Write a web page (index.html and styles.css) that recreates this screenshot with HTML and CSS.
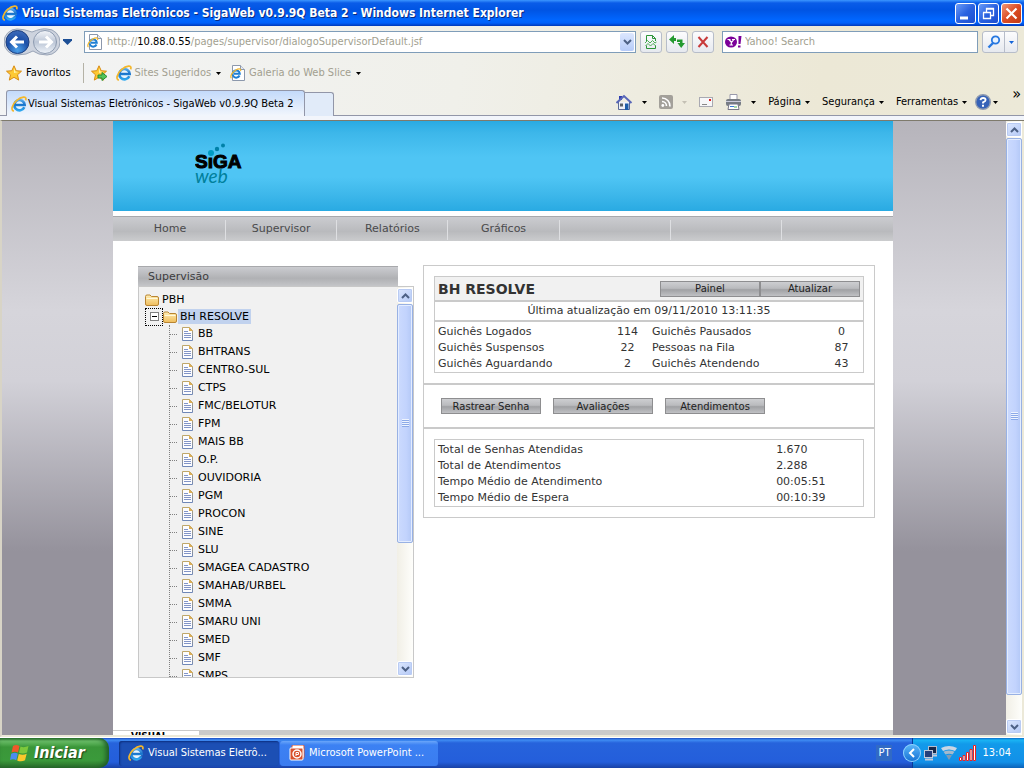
FILE: index.html
```html
<!DOCTYPE html>
<html lang="pt-BR">
<head>
<meta charset="utf-8">
<title>Visual Sistemas Eletrônicos - SigaWeb v0.9.9Q Beta 2</title>
<link rel="stylesheet" href="styles.css">
</head>
<body>
<svg class="defs" aria-hidden="true">
  <defs>
    <linearGradient id="gBlue" gradientUnits="userSpaceOnUse" x1="0" y1="2" x2="0" y2="15"><stop offset="0" stop-color="#6cc0f6"/><stop offset=".5" stop-color="#1a74cc"/><stop offset="1" stop-color="#30aaf0"/></linearGradient>
    <linearGradient id="gFolder" x1="0" y1="0" x2="0" y2="1"><stop offset="0" stop-color="#ffeeb4"/><stop offset="1" stop-color="#efbd5c"/></linearGradient>
    <radialGradient id="gBack" cx=".5" cy=".85" r=".8"><stop offset="0" stop-color="#4aa0ea"/><stop offset=".6" stop-color="#1d50a8"/><stop offset="1" stop-color="#3a68b8"/></radialGradient>
    <linearGradient id="gFwd" x1="0" y1="0" x2="0" y2="1"><stop offset="0" stop-color="#f4f6fa"/><stop offset=".5" stop-color="#bcc6d6"/><stop offset="1" stop-color="#eef3f9"/></linearGradient>
    <linearGradient id="gDoc" x1="0" y1="0" x2="0" y2="1"><stop offset="0" stop-color="#bfa76a"/><stop offset="1" stop-color="#7088b8"/></linearGradient>
    <symbol id="ie" viewBox="0 0 16 16">
      <circle cx="8.500" cy="8.500" r="5" fill="#e8f4fe"/>
      <path d="M13.300 11.200A5.200 5.200 0 1 1 13.700 9H4.500" fill="none" stroke="url(#gBlue)" stroke-width="2.600"/>
      <path d="M3 15C-.5 15 .8 8.500 5.500 4.600C10 .8 16.500-.8 14.600 4.400" fill="none" stroke="#f3b72c" stroke-width="1.700"/>
    </symbol>
    <symbol id="iepage" viewBox="0 0 16 16">
      <path d="M2.500.5h8l4 4v11h-12z" fill="#fff" stroke="#8c98ac"/><path d="M10.500.5v4h4" fill="#e4e9f2" stroke="#8c98ac"/>
      <path d="M9.500 10.500A3.600 3.600 0 1 1 9.800 8.800H4" fill="none" stroke="#1e7fd4" stroke-width="2"/>
      <path d="M1.500 13C-.5 12 2 7.500 5.500 5.300C8.500 3.400 11.500 3.300 10.500 6" fill="none" stroke="#f3b72c" stroke-width="1.200"/>
    </symbol>
    <symbol id="star" viewBox="0 0 16 16"><path d="M8 .8l2.200 4.900 5.300.5-4 3.600 1.200 5.300L8 12.300l-4.700 2.800 1.200-5.300-4-3.600 5.300-.5z" fill="#fdc934" stroke="#d98b12"/><path d="M8 3l1.300 3.600 3.200.4L8 8z" fill="#fff3a8"/></symbol>
    <symbol id="folder" viewBox="0 0 14 12"><path d="M.5 2.500q0-1.500 1.500-1.500h3l1.500 1.500h5.500q1.500 0 1.500 1.500v6q0 1.500-1.500 1.500H2Q.5 11.500.5 10z" fill="url(#gFolder)" stroke="#b98532"/><path d="M1.500 4.500h11" stroke="#fff9dc"/></symbol>
    <symbol id="doc" viewBox="0 0 11 14"><path d="M.5.500h7l3 3v10H.5z" fill="#fdfdff" stroke="url(#gDoc)"/><path d="M7 0l4 4H7z" fill="#dcae55"/><path d="M2 4.500h4M2 6.500h7M2 8.500h7M2 10.500h7" stroke="#8295c8"/></symbol>
    <symbol id="up" viewBox="0 0 9 6"><path d="M1 5L4.500 1.500 8 5" fill="none" stroke="#4d6185" stroke-width="2"/></symbol>
    <symbol id="down" viewBox="0 0 9 6"><path d="M1 1l3.500 3.500L8 1" fill="none" stroke="#4d6185" stroke-width="2"/></symbol>
    <symbol id="caret" viewBox="0 0 5 3"><path d="M0 0h5L2.500 3z" fill="currentColor"/></symbol>
  </defs>
</svg>

<header class="titlebar">
  <svg class="i16"><use href="#ie"/></svg>
  <h1 class="title">Visual Sistemas Eletrônicos - SigaWeb v0.9.9Q Beta 2 - Windows Internet Explorer</h1>
  <div class="winbtns">
    <button class="winbtn" aria-label="Minimizar"><svg width="19" height="19"><path d="M4 14h8" stroke="#fff" stroke-width="3"/></svg></button>
    <button class="winbtn" aria-label="Restaurar"><svg width="19" height="19"><path d="M7.500 8V4.500h7v7H12M7 5h8M4 8.500h7.500v6h-7v-6" fill="none" stroke="#fff" stroke-width="1.300"/></svg></button>
    <button class="winbtn close" aria-label="Fechar"><svg width="19" height="19"><path d="M4.500 4.500l10 10M14.500 4.500l-10 10" stroke="#fff" stroke-width="2.200"/></svg></button>
  </div>
</header>

<section class="chrome">
  <div class="navrow">
    <div class="travel">
      <svg width="56" height="28" viewBox="0 0 56 28">
        <path d="M13 1Q20 1 28 4Q38 0 43 1A13 13 0 0 1 43 27Q34 27 29 23Q23 27 13 27A13 13 0 0 1 13 1z" fill="#cdd3de" stroke="#9ba6b8"/>
        <circle cx="13.500" cy="14" r="11.500" fill="url(#gBack)" stroke="#1c3f80"/><circle cx="41" cy="14" r="11.500" fill="url(#gFwd)" stroke="#8d9bb0"/>
        <path d="M20 14H8M13 8.500L7.500 14l5.500 5.500M35 14h12M42 8.500l5.500 5.500-5.500 5.500" fill="none" stroke="#fff" stroke-width="3"/>
      </svg>
      <svg width="9" height="6"><path d="M0 0h9v1.500L4.500 6 0 1.500z" fill="#1c4f96"/></svg>
    </div>
    <div class="address">
      <svg class="i16"><use href="#iepage"/></svg>
      <span class="url">http://<b>10.88.0.55</b>/pages/supervisor/dialogoSupervisorDefault.jsf</span>
      <button class="drop" aria-label="Histórico"><svg width="9" height="6"><use href="#down"/></svg></button>
    </div>
    <button class="tool" aria-label="Compatibilidade"><svg width="14" height="16"><path d="M2.500 7V1.500h6l3 3V7M8.500 1.500v3h3M2.500 11.500v3h9v-3" fill="none" stroke="#2c9438"/><path d="M1 9l2.500-2.500L6 9l2.500-2.500L11 9l1.500-1M1.500 12L4 9.500 6.500 12 9 9.500l3 2.500" fill="none" stroke="#4eae56"/></svg></button>
    <button class="tool" aria-label="Atualizar página"><svg width="16" height="14"><path d="M5 0v3h2v3H5v3L0 4.500zM8 4.500h5.500V8H16l-3.800 5L8.500 8H11V7H8z" fill="#249a30"/></svg></button>
    <button class="tool" aria-label="Parar"><svg width="12" height="12"><path d="M1.500 1l9 10M10.500 1l-9 10" stroke="#c83a3a" stroke-width="2"/></svg></button>
    <div class="search">
      <svg width="17" height="12"><ellipse cx="6" cy="6" rx="6" ry="5.500" fill="#7b0099"/><path d="M2.500 3.500h3M7 3.500h3M4 3.500l2.500 3 2.300-3M6.300 6v3M4.500 9h3.500" fill="none" stroke="#fff" stroke-width="1.200"/><path d="M13.500 0h3l-1 8h-2zM13 9.500h2.500v2H13z" fill="#7b0099"/></svg>
      <input class="searchbox" type="text" aria-label="Pesquisar" placeholder="Yahoo! Search">
    </div>
    <div class="split">
      <button class="go" aria-label="Ir"><svg width="14" height="14"><circle cx="8.500" cy="5" r="3.700" fill="#eaf4ff" stroke="#2878e0" stroke-width="1.800"/><path d="M6 8l-4.500 4.500" stroke="#2878e0" stroke-width="2.400"/></svg></button>
      <button class="more" aria-label="Opções"><svg class="caret"><use href="#caret"/></svg></button>
    </div>
  </div>

  <div class="favrow">
    <button class="flat fav"><svg class="i16"><use href="#star"/></svg>Favoritos</button>
    <span class="sep"></span>
    <button class="flat" aria-label="Adicionar a favoritos"><svg class="i16" viewBox="0 0 16 16"><use href="#star"/><path d="M7 10h4V7.500l5 4-5 4V13H7z" fill="#52c45a" stroke="#2b8a30"/></svg></button>
    <button class="flat dim"><svg class="i16"><use href="#ie"/></svg>Sites Sugeridos<svg class="caret"><use href="#caret"/></svg></button>
    <button class="flat dim"><svg class="i16"><use href="#iepage"/></svg>Galeria do Web Slice<svg class="caret"><use href="#caret"/></svg></button>
  </div>

  <div class="tabrow">
    <div class="tab"><svg class="i16"><use href="#ie"/></svg>Visual Sistemas Eletrônicos - SigaWeb v0.9.9Q Beta 2</div>
    <button class="newtab" aria-label="Nova guia"></button>
    <div class="commands">
      <button class="flat wide" aria-label="Página inicial"><svg width="17" height="17"><path d="M2.500 8v7.500h11V8" fill="#eef1f8" stroke="#5b6a98"/><path d="M3 2h3v4H3z" fill="#2c3bb0"/><path d="M.5 9L8 2l7.500 7" fill="none" stroke="#5967b8" stroke-width="2"/><path d="M9 9.500h3.500V16H9z" fill="#1d5ca8"/><path d="M4 9.500h3v3H4z" fill="#5a6068"/></svg><svg class="caret"><use href="#caret"/></svg></button>
      <button class="flat wide" aria-label="Feeds"><svg width="14" height="14"><rect width="14" height="14" rx="2" fill="#a3a09a"/><circle cx="3.800" cy="10.500" r="1.400" fill="#fff"/><path d="M3 6.500a4.500 4.500 0 0 1 4.500 4.500M3 3a8 8 0 0 1 8 8.500" fill="none" stroke="#fff" stroke-width="1.600"/></svg><svg class="caret pale"><use href="#caret"/></svg></button>
      <button class="flat" aria-label="Correio"><svg width="14" height="10"><rect x=".5" y=".5" width="13" height="9" fill="#f7f7f9" stroke="#a9a9b2"/><path d="M3 7.500h5" stroke="#888"/><path d="M10 2h2v2h-2z" fill="#e02020"/></svg></button>
      <button class="flat wide" aria-label="Imprimir"><svg width="17" height="16"><path d="M5 .5h7V6H5z" fill="#fff" stroke="#99a"/><rect x="1" y="5" width="15" height="7" rx="2" fill="#777c84"/><path d="M1 7.500h15" stroke="#ccd"/><path d="M4 10h9l1 5.500H3z" fill="#fff" stroke="#778"/><path d="M5 12.500h4" stroke="#3a7ad8"/><path d="M9 13h3" stroke="#4ab058"/></svg><svg class="caret"><use href="#caret"/></svg></button>
      <button class="flat text">Página<svg class="caret"><use href="#caret"/></svg></button>
      <button class="flat text">Segurança<svg class="caret"><use href="#caret"/></svg></button>
      <button class="flat text">Ferramentas<svg class="caret"><use href="#caret"/></svg></button>
      <button class="flat text help" aria-label="Ajuda"><svg width="16" height="16"><circle cx="8" cy="8" r="7.300" fill="#3562b8" stroke="#8e9ab0" stroke-width="1.400"/><path d="M5.500 6.200Q5.800 4 8.100 4q2.500 0 2.500 2Q10.600 7.300 8 8.300V9.500" fill="none" stroke="#fff" stroke-width="1.800"/><path d="M7 10.800h2v2H7z" fill="#fff"/></svg><svg class="caret"><use href="#caret"/></svg></button>
      <span class="chev">»</span>
    </div>
  </div>
</section>

<main class="viewport">
  <div class="stage">
    <div class="page">
      <div class="banner">
        <svg width="60" height="46" role="img" aria-label="SiGA web">
          <text class="siga" x="0" y="25">SıGA</text>
          <circle cx="16" cy="10" r="3" fill="#009cc4"/><circle cx="22" cy="6" r="2.200" fill="#0081a8"/><circle cx="28" cy="2.500" r="2" fill="#0081a8"/>
          <text class="web" x="0" y="40">web</text>
        </svg>
      </div>
      <nav class="menu">
        <a href="#">Home</a><a href="#">Supervisor</a><a href="#">Relatórios</a><a href="#">Gráficos</a><span></span><span></span><span></span>
      </nav>
      <div class="content">
        <section class="side">
          <h2 class="sidehead">Supervisão</h2>
          <div class="treebox">
            <div class="tree">
              <div class="node root"><svg class="folder"><use href="#folder"/></svg>PBH</div>
              <div class="node branch"><button class="expander" aria-label="Recolher"><svg width="9" height="9"><rect x=".5" y=".5" width="8" height="8" fill="#fff" stroke="#808080"/><path d="M2 4.500h5" stroke="#000"/></svg></button><svg class="folder"><use href="#folder"/></svg><span class="selected">BH RESOLVE</span></div>
              <ul class="leaves">
                <li><svg class="doc"><use href="#doc"/></svg>BB</li>
                <li><svg class="doc"><use href="#doc"/></svg>BHTRANS</li>
                <li><svg class="doc"><use href="#doc"/></svg>CENTRO-SUL</li>
                <li><svg class="doc"><use href="#doc"/></svg>CTPS</li>
                <li><svg class="doc"><use href="#doc"/></svg>FMC/BELOTUR</li>
                <li><svg class="doc"><use href="#doc"/></svg>FPM</li>
                <li><svg class="doc"><use href="#doc"/></svg>MAIS BB</li>
                <li><svg class="doc"><use href="#doc"/></svg>O.P.</li>
                <li><svg class="doc"><use href="#doc"/></svg>OUVIDORIA</li>
                <li><svg class="doc"><use href="#doc"/></svg>PGM</li>
                <li><svg class="doc"><use href="#doc"/></svg>PROCON</li>
                <li><svg class="doc"><use href="#doc"/></svg>SINE</li>
                <li><svg class="doc"><use href="#doc"/></svg>SLU</li>
                <li><svg class="doc"><use href="#doc"/></svg>SMAGEA CADASTRO</li>
                <li><svg class="doc"><use href="#doc"/></svg>SMAHAB/URBEL</li>
                <li><svg class="doc"><use href="#doc"/></svg>SMMA</li>
                <li><svg class="doc"><use href="#doc"/></svg>SMARU UNI</li>
                <li><svg class="doc"><use href="#doc"/></svg>SMED</li>
                <li><svg class="doc"><use href="#doc"/></svg>SMF</li>
                <li><svg class="doc"><use href="#doc"/></svg>SMPS</li>
              </ul>
            </div>
            <div class="scroll">
              <button class="sbtn" aria-label="Acima"><svg width="9" height="6"><use href="#up"/></svg></button>
              <div class="track"><div class="thumb part"><i class="grip"></i></div></div>
              <button class="sbtn" aria-label="Abaixo"><svg width="9" height="6"><use href="#down"/></svg></button>
            </div>
          </div>
        </section>

        <section class="panel">
          <div class="block">
            <div class="card">
              <div class="cardhead"><h2 class="unit">BH RESOLVE</h2><div class="pair"><button class="btn">Painel</button><button class="btn">Atualizar</button></div></div>
              <p class="stamp">Última atualização em 09/11/2010 13:11:35</p>
              <table class="counts">
                <tr><td>Guichês Logados</td><td class="num">114</td><td>Guichês Pausados</td><td class="num">0</td></tr>
                <tr><td>Guichês Suspensos</td><td class="num">22</td><td>Pessoas na Fila</td><td class="num">87</td></tr>
                <tr><td>Guichês Aguardando</td><td class="num">2</td><td>Guichês Atendendo</td><td class="num">43</td></tr>
              </table>
            </div>
          </div>
          <div class="block actions"><button class="btn">Rastrear Senha</button><button class="btn">Avaliações</button><button class="btn">Atendimentos</button></div>
          <div class="block">
            <div class="card">
              <table class="totals">
                <tr><td>Total de Senhas Atendidas</td><td>1.670</td></tr>
                <tr><td>Total de Atendimentos</td><td>2.288</td></tr>
                <tr><td>Tempo Médio de Atendimento</td><td>00:05:51</td></tr>
                <tr><td>Tempo Médio de Espera</td><td>00:10:39</td></tr>
              </table>
            </div>
          </div>
        </section>
      </div>
      <footer class="foot"><span class="brand">VISUAL</span></footer>
    </div>
  </div>
  <div class="scroll">
    <button class="sbtn" aria-label="Acima"><svg width="9" height="6"><use href="#up"/></svg></button>
    <div class="track"><div class="thumb long"><i class="grip"></i></div></div>
    <button class="sbtn" aria-label="Abaixo"><svg width="9" height="6"><use href="#down"/></svg></button>
  </div>
</main>

<footer class="taskbar">
  <button class="start"><svg width="20" height="20" viewBox="0 0 20 20"><path d="M3 3Q6 1 9.500 3L8 9.500Q5 8 1.500 9.500z" fill="#f0582a"/><path d="M10.500 3.500Q14 5 18.500 3L17 9.500Q13 11.500 9 9.800z" fill="#7cc83c"/><path d="M1.200 10.700Q5 9 7.800 10.700L6.300 17.200Q3 15.500 0 17z" fill="#4c8cf0"/><path d="M8.800 11Q13 12.700 16.700 10.800L15 17.300Q11 19.300 7.200 17.500z" fill="#fbc82c"/></svg>Iniciar</button>
  <button class="task active"><svg class="i16"><use href="#ie"/></svg>Visual Sistemas Eletrô...</button>
  <button class="task"><svg class="i16" viewBox="0 0 16 16"><rect x="3" y="0" width="12" height="13" rx="1" fill="#fff" stroke="#d8502c"/><rect x="1" y="3" width="13" height="12" rx="1" fill="#d8502c" stroke="#fff"/><circle cx="8" cy="9" r="4" fill="none" stroke="#fff" stroke-width="1.500"/><path d="M7 11V7.500h2.500v2H7" fill="none" stroke="#fff"/></svg>Microsoft PowerPoint ...</button>
  <span class="lang">PT</span>
  <div class="tray">
    <button class="expand" aria-label="Mostrar ícones"><svg width="8" height="10"><path d="M6 1L2 5l4 4" fill="none" stroke="#fff" stroke-width="2"/></svg></button>
    <svg width="16" height="16"><rect x="5.500" y="1.500" width="8" height="7" fill="#182848" stroke="#b4bccc"/><path d="M7 10.500h7" stroke="#c4c9d8" stroke-width="2"/><rect x="1.500" y="5.500" width="8" height="7" fill="#27407c" stroke="#c2cada"/><path d="M2 14.500h8" stroke="#c4c9d8" stroke-width="2"/></svg>
    <svg width="16" height="16"><path d="M0 3q8-4 16 0l-2 3Q8 3 2 6z" fill="#c9d6e4"/><path d="M2.500 6.800q5.500-2.800 11 0l-2 2.700q-3.500-1.500-7 0z" fill="#a4b9cc"/><path d="M5 10.300q3-1.300 6 0L8 15z" fill="#7f9bb4"/></svg>
    <svg width="17" height="16"><path d="M.5 12.500h2v3h-2zM4 10.500h2v5H4zM7.500 7.500h2v8h-2zM11 4.500h2v11h-2zM14.500.5h2v15h-2z" fill="#fff" stroke="#f02020"/></svg>
    <span class="clock">13:04</span>
  </div>
</footer>
</body>
</html>
```
FILE: styles.css
```css
* { box-sizing: border-box; }
body {
  margin: 0;
  height: 100vh;
  display: flex;
  flex-direction: column;
  overflow: hidden;
  font: 11px/16px "DejaVu Sans Condensed", "DejaVu Sans", sans-serif;
  color: #000;
}
button { font: inherit; color: inherit; padding: 0; margin: 0; border: 0; background: none; }
svg { display: block; flex: none; }
.defs { position: absolute; width: 0; height: 0; }
.i16 { width: 16px; height: 16px; }
.caret { width: 5px; height: 3px; color: #000; }
.caret.pale { color: #c4c0b4; }

.titlebar {
  height: 26px;
  flex: none;
  display: flex;
  align-items: center;
  gap: 4px;
  padding: 0 2px;
  background: linear-gradient(#3c96ff 0, #0a5ce8 3px, #0054e3 10px, #0066ff 20px, #0060fa 23px, #0038b8 26px);
}
.title {
  flex: 1;
  margin: 0;
  font: bold 12px/18px "DejaVu Sans Condensed", "DejaVu Sans", sans-serif;
  color: #fff;
  text-shadow: 1px 1px 0 #0a2a80;
  white-space: nowrap;
}
.winbtns { display: flex; gap: 2px; }
.winbtn {
  width: 21px;
  height: 21px;
  border: 1px solid #fff;
  border-radius: 3px;
  background: linear-gradient(135deg, #6a9cf8, #2a62e0 50%, #1d4fd0);
}
.winbtn.close { background: linear-gradient(135deg, #f09878, #dc4c24 50%, #c03a14); }

.chrome { flex: none; background: linear-gradient(100deg, #f3f4f5 0, #f0f0ea 45%, #ece8d6 80%, #ece9d8); }
.navrow { display: flex; align-items: center; height: 32px; padding: 0 6px 0 4px; }
.travel { display: flex; align-items: center; gap: 3px; width: 80px; }
.address {
  flex: 1;
  display: flex;
  align-items: center;
  height: 22px;
  padding: 0 1px 0 2px;
  border: 1px solid #7f9db9;
  background: #fff;
  color: #a29f90;
}
.url { flex: 1; margin-left: 4px; }
.url b { font-weight: normal; color: #000; }
.drop {
  display: grid;
  place-items: center;
  width: 14px;
  height: 18px;
  border-radius: 2px;
  background: linear-gradient(#dce7fe, #b6cbf8);
}
.tool {
  display: grid;
  place-items: center;
  width: 22px;
  height: 22px;
  margin-left: 4px;
  border: 1px solid #b7bdc9;
  border-radius: 3px;
  background: linear-gradient(#fcfcfd, #e6e9ef);
}
.search {
  display: flex;
  align-items: center;
  width: 256px;
  height: 22px;
  margin-left: 8px;
  padding: 0 2px;
  border: 1px solid #7f9db9;
  background: #fff;
}
.searchbox { flex: 1; min-width: 0; padding: 0 3px; border: 0; outline: 0; font: inherit; background: none; }
.searchbox::placeholder { color: #a29f90; }
.split {
  display: flex;
  height: 22px;
  margin-left: 4px;
  border: 1px solid #b7bdc9;
  border-radius: 3px;
  background: linear-gradient(#fcfcfd, #e6e9ef);
}
.go { display: grid; place-items: center; width: 21px; }
.more { display: grid; place-items: center; width: 13px; border-left: 1px solid #b7bdc9; }
.more .caret { color: #1464d8; }

.favrow { display: flex; align-items: center; gap: 9px; height: 30px; padding: 0 6px; }
.flat { display: flex; align-items: center; gap: 4px; white-space: nowrap; }
.flat.dim { color: #a29f90; gap: 3px; }
.flat.dim .caret { margin-left: 2px; }
.sep { width: 1px; height: 20px; margin: 0 -2px 0 3px; background: #b4b2a6; }

.tabrow {
  display: flex;
  align-items: flex-end;
  height: 32px;
  padding: 0 3px 0 6px;
  border-bottom: 4px solid #f2f5fb;
  box-shadow: inset 0 -1px 0 #9296a8;
}
.tab {
  display: flex;
  align-items: center;
  gap: 1px;
  width: 299px;
  height: 26px;
  padding: 0 4px;
  border: 1px solid #9296a8;
  border-bottom: 0;
  border-radius: 3px 3px 0 0;
  background: linear-gradient(#c3dafb, #f2f6fc);
  white-space: nowrap;
}
.newtab { width: 29px; height: 24px; border: 1px solid #9296a8; border-bottom: 0; border-left: 0; border-radius: 0 3px 0 0; background: #e1ebf9; }
.commands { display: flex; align-items: center; flex: 1; justify-content: flex-end; gap: 12px; height: 28px; }
.flat.wide { gap: 9px; }
.flat.text { gap: 4px; }
.flat.help { gap: 2px; margin-left: -4px; }
.chev { font-size: 16px; margin: -16px 0 0 2px; }

.viewport {
  flex: 1;
  min-height: 0;
  display: flex;
  padding: 0 2px 0 0;
  border-left: 2px solid #d8d4c6;
  border-top: 1px solid #7e7a6c;
  border-bottom: 2px solid #ece9d8;
  background: #ece9d8;
}
.stage {
  flex: 1;
  display: flex;
  justify-content: center;
  overflow: hidden;
  background: linear-gradient(#b6b4bb 0, #d6d5db 190px, #d2d1d8 260px, #95929c 430px, #95929c);
}
.page { flex: 0 1 780px; display: flex; flex-direction: column; background: #fff; overflow: hidden; margin-right: 2px; }
.banner {
  flex: none;
  height: 90px;
  padding: 22px 82px;
  background: linear-gradient(#29aae2 0, #3db7ea 12px, #4fc5f4 36px, #4fc5f4 56px, #3db7ea 74px, #29aae2 90px);
}
.siga { font: bold 19px "Liberation Sans", Arial, sans-serif; stroke: #000; stroke-width: 1px; }
.web { font: italic 19px Lato, sans-serif; fill: #00809c; }
.menu {
  flex: none;
  display: grid;
  grid-template-columns: repeat(7, 1fr);
  height: 25px;
  margin-top: 5px;
  padding-left: 2px;
  border-top: 1px solid #a8a9ac;
  background: linear-gradient(#cbccd0, #b9babd 60%, #cbccce);
  font: 11px/23px "DejaVu Sans", Verdana, sans-serif;
}
.menu > * { margin: 3px 0 1px; line-height: 18px; text-align: center; color: #4a4a4c; text-decoration: none; border-right: 1px solid #dedfe2; }
.menu > :last-child { border: 0; }
.content {
  flex: 1;
  min-height: 0;
  display: flex;
  align-items: flex-start;
  gap: 9px;
  padding: 24px 18px 0 25px;
  font: 11px/16px "DejaVu Sans", Verdana, sans-serif;
}
.side { flex: 0 0 276px; margin-top: 1px; }
.sidehead {
  width: 260px;
  margin: 0;
  padding-left: 10px;
  border-top: 1px solid #a8a9ac;
  background: linear-gradient(#cbccd0, #b0b1b4 60%, #c4c5c8);
  font: 11px/19px "DejaVu Sans", Verdana, sans-serif;
  color: #3c3c3e;
}
.treebox { display: flex; height: 392px; border: 1px solid #c8c8c8; background: #f1f1f1; }
.tree { flex: 1; overflow: hidden; padding: 4px 0 0 6px; }
.node { display: flex; align-items: center; }
.root { height: 17px; gap: 3px; }
.folder { width: 14px; height: 12px; }
.branch { height: 17px; }
.expander { display: grid; place-items: center; width: 18px; height: 18px; border: 1px dotted #000; }
.selected { margin-left: 1px; padding: 0 2px; line-height: 15px; background: #c1d2ee; }
.leaves { list-style: none; margin: 0 0 0 24px; padding: 0; border-left: 1px dotted #808080; }
.leaves li { display: flex; align-items: center; gap: 5px; height: 18px; }
.leaves li::before { content: ""; width: 7px; border-top: 1px dotted #808080; }
.doc { width: 11px; height: 14px; }

.scroll { flex: none; display: flex; flex-direction: column; width: 16px; padding: 1px 0; background: linear-gradient(90deg, #f1efe6, #fefefb); }
.sbtn { flex: none; display: grid; place-items: center; height: 15px; border: 1px solid #fff; border-radius: 2px; background: linear-gradient(135deg, #dce7fe, #b4c9f6); box-shadow: inset 0 0 0 1px #b9cbf3; }
.track { flex: 1; min-height: 0; padding: 1px 0; }
.thumb { display: grid; place-items: center; border: 1px solid #98b1e4; border-radius: 2px; background: linear-gradient(90deg, #cbdafe, #c2d3fd 60%, #b3c8f6); box-shadow: inset 0 0 0 1px #e4edff; }
.part { height: 67%; }
.long { height: 96%; }
.grip { width: 7px; height: 8px; background: repeating-linear-gradient(#eef4fe 0 1px, #8caae8 1px 2px); }

.panel { flex: 1; border: 1px solid #cacaca; color: #333; }
.block { padding: 10px; }
.block + .block { border-top: 2px solid #cacaca; }
.card { border: 1px solid #cacaca; }
.cardhead { display: flex; align-items: center; justify-content: space-between; height: 25px; padding: 0 3px; background: #f1f1f1; border-bottom: 2px solid #cacaca; }
.unit { margin: 0; font: bold 14px/20px "DejaVu Sans", Verdana, sans-serif; }
.pair { display: flex; }
.btn {
  width: 100px;
  height: 16px;
  border: 1px solid #8e8e90;
  background: linear-gradient(#cdced1, #babbbe 45%, #a0a1a4 55%, #c0c1c4);
  font: 10px/13px "DejaVu Sans", Verdana, sans-serif;
  color: #222;
}
.stamp { margin: 0; text-align: center; line-height: 18px; border-bottom: 2px solid #cacaca; }
table { width: 100%; border-collapse: collapse; table-layout: fixed; }
td { padding: 0 3px; height: 16px; }
.counts { margin: 2px 0 0; }
.counts td { width: 40%; }
.counts .num { width: 10%; text-align: center; }
.totals { margin: 2px 0 0; }
.totals td:last-child { width: 21%; }
.actions { display: flex; gap: 12px; padding: 13px 17px; }
.foot { flex: none; height: 5px; padding-top: 1px; overflow: hidden; background: #cacaca; }
.brand { display: block; width: 86px; padding-left: 18px; background: #fff; font: bold 9px/11px "DejaVu Sans", sans-serif; }

.taskbar {
  flex: none;
  height: 31px;
  display: flex;
  align-items: center;
  border-top: 1px solid #fff;
  background: linear-gradient(#1c4bc0 0, #3f8cf3 2px, #2663dc 5px, #245edb 24px, #1941a5 30px);
  color: #fff;
}
.start {
  display: flex;
  align-items: center;
  gap: 4px;
  width: 109px;
  height: 30px;
  padding-left: 10px;
  border-radius: 0 10px 10px 0;
  background: linear-gradient(#2f7d30 0, #6cc069 3px, #3a9639 9px, #3b9a3b 22px, #2a6e2a 30px);
  box-shadow: inset -3px 0 5px #1f5a28;
  font: italic bold 16px/24px "DejaVu Sans Condensed", "DejaVu Sans", sans-serif;
  text-shadow: 1px 1px 1px #1a4218;
}
.task {
  display: flex;
  align-items: center;
  gap: 4px;
  width: 158px;
  height: 25px;
  padding-left: 9px;
  border-radius: 3px;
  background: linear-gradient(#6aa6fa 0, #3c81f3 4px, #3a7cf0);
  white-space: nowrap;
}
.task.active { width: 160px; margin: 0 1px 0 10px; background: #1c4fb4; box-shadow: inset 1px 1px 2px #0c2f80; }
.lang { margin-left: auto; padding: 0 2px; background: #316ac5; }
.tray {
  display: flex;
  align-items: center;
  gap: 2px;
  height: 30px;
  margin-left: 20px;
  padding-right: 13px;
  border-left: 1px solid #0a3a98;
  background: linear-gradient(#0c6cc8 0, #1ab4f4 2px, #129aea 6px, #1290e8 24px, #0c62b8 30px);
}
.expand { display: grid; place-items: center; width: 18px; height: 18px; margin-left: -10px; border-radius: 9px; background: linear-gradient(#5cb8fa, #1470d4); box-shadow: inset 0 0 0 1px #8fd0fc; }
.clock { margin-left: 4px; }
```
